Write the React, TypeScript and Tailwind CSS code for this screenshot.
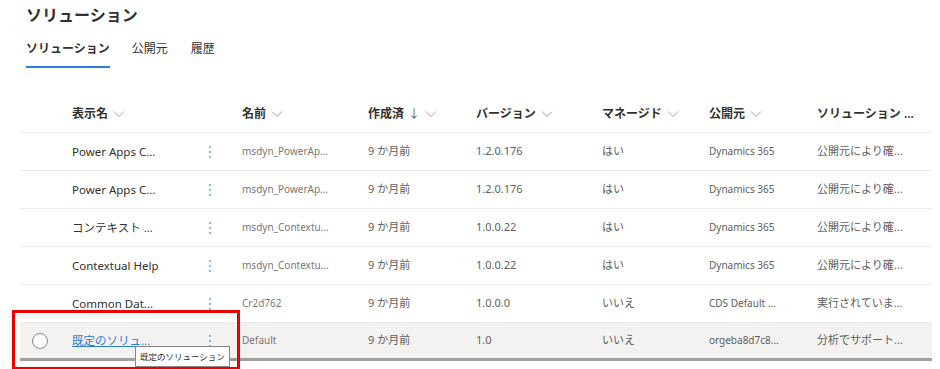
import React from "react";

const font = { fontFamily: '"Noto Sans", "Noto Sans CJK JP", sans-serif' };

type Row = {
  display: string;
  name: string;
  created: string;
  version: string;
  managed: string;
  publisher: string;
  solution: string;
  selected?: boolean;
};

const rows: Row[] = [
  { display: "Power Apps C...", name: "msdyn_PowerAp...", created: "9 か月前", version: "1.2.0.176", managed: "はい", publisher: "Dynamics 365", solution: "公開元により確..." },
  { display: "Power Apps C...", name: "msdyn_PowerAp...", created: "9 か月前", version: "1.2.0.176", managed: "はい", publisher: "Dynamics 365", solution: "公開元により確..." },
  { display: "コンテキスト ...", name: "msdyn_Contextu...", created: "9 か月前", version: "1.0.0.22", managed: "はい", publisher: "Dynamics 365", solution: "公開元により確..." },
  { display: "Contextual Help", name: "msdyn_Contextu...", created: "9 か月前", version: "1.0.0.22", managed: "はい", publisher: "Dynamics 365", solution: "公開元により確..." },
  { display: "Common Dat...", name: "Cr2d762", created: "9 か月前", version: "1.0.0.0", managed: "いいえ", publisher: "CDS Default ...", solution: "実行されていま..." },
  { display: "既定のソリュ...", name: "Default", created: "9 か月前", version: "1.0", managed: "いいえ", publisher: "orgeba8d7c8...", solution: "分析でサポート...", selected: true },
];

const Chevron = () => (
  <svg width="12" height="8" viewBox="0 0 12 8" className="ml-[5px] inline-block">
    <path d="M1 1.5 L6 6.5 L11 1.5" fill="none" stroke="#a19f9d" strokeWidth="1" />
  </svg>
);

const Dots = () => (
  <svg width="4" height="14" viewBox="0 0 4 14">
    <circle cx="2" cy="2" r="1.1" fill="#6aa8e4" />
    <circle cx="2" cy="7" r="1.1" fill="#6aa8e4" />
    <circle cx="2" cy="12" r="1.1" fill="#6aa8e4" />
  </svg>
);

const grid = "grid grid-cols-[52px_128px_42px_126px_108px_126px_107px_108px_115px] items-center";

export default function App() {
  return (
    <div className="relative h-[369px] w-[940px] overflow-hidden bg-white" style={font}>
      <div className="px-[26px]">
        <div className="h-[30px] pt-[5px] text-[16px] font-bold leading-[20px] text-[#323130]">ソリューション</div>
        <div className="flex gap-[22px] text-[12px] leading-[16px] text-[#323130]">
          <div className="border-b-2 border-[#2b7cd3] pb-[9px] pt-[11px] font-semibold">ソリューション</div>
          <div className="border-b-2 border-transparent pb-[9px] pt-[11px]">公開元</div>
          <div className="ml-[1px] border-b-2 border-transparent pb-[9px] pt-[11px]">履歴</div>
        </div>
      </div>

      <div className="ml-[20px] mt-[27px] w-[912px]">
        <div className={`${grid} h-[38px] border-b border-[#edebe9] text-[12px] font-semibold text-[#323130]`}>
          <div />
          <div className="flex items-center">表示名<Chevron /></div>
          <div />
          <div className="flex items-center">名前<Chevron /></div>
          <div className="flex items-center">作成済 <span className="ml-[4px] font-normal text-[#605e5c]">↓</span><Chevron /></div>
          <div className="flex items-center">バージョン<Chevron /></div>
          <div className="flex items-center">マネージド<Chevron /></div>
          <div className="flex items-center">公開元<Chevron /></div>
          <div>ソリューション ...</div>
        </div>

        {rows.map((r, i) => (
          <div
            key={i}
            className={`${grid} h-[38px] text-[11px] text-[#605e5c] ${
              r.selected ? "border-b-[3px] border-[#a19f9d] bg-[#f3f2f1]" : "border-b border-[#edebe9]"
            }`}
          >
            <div className="flex pl-[12px]">
              {r.selected && <div className="h-[16px] w-[16px] rounded-full border border-[#8a8886] bg-white" />}
            </div>
            {r.selected ? (
              <div className="text-[11.5px] text-[#2b7cd3] underline">{r.display}</div>
            ) : (
              <div className="text-[11.5px] text-[#323130]">{r.display}</div>
            )}
            <div className="flex pl-[8px]">
              <Dots />
            </div>
            <div className="text-[10px] text-[#797775]">{r.name}</div>
            <div>{r.created}</div>
            <div>{r.version}</div>
            <div>{r.managed}</div>
            <div className="text-[10px]">{r.publisher}</div>
            <div>{r.solution}</div>
          </div>
        ))}
      </div>

      <div className="absolute left-[135px] top-[346px] border border-[#8a8886] bg-white px-[4px] py-[2px] text-[8.5px] leading-[15px] text-[#323130]">
        既定のソリューション
      </div>

      <div className="absolute left-[12px] top-[310px] h-[60px] w-[228px] border-[3px] border-[#ee0000]" />
    </div>
  );
}
